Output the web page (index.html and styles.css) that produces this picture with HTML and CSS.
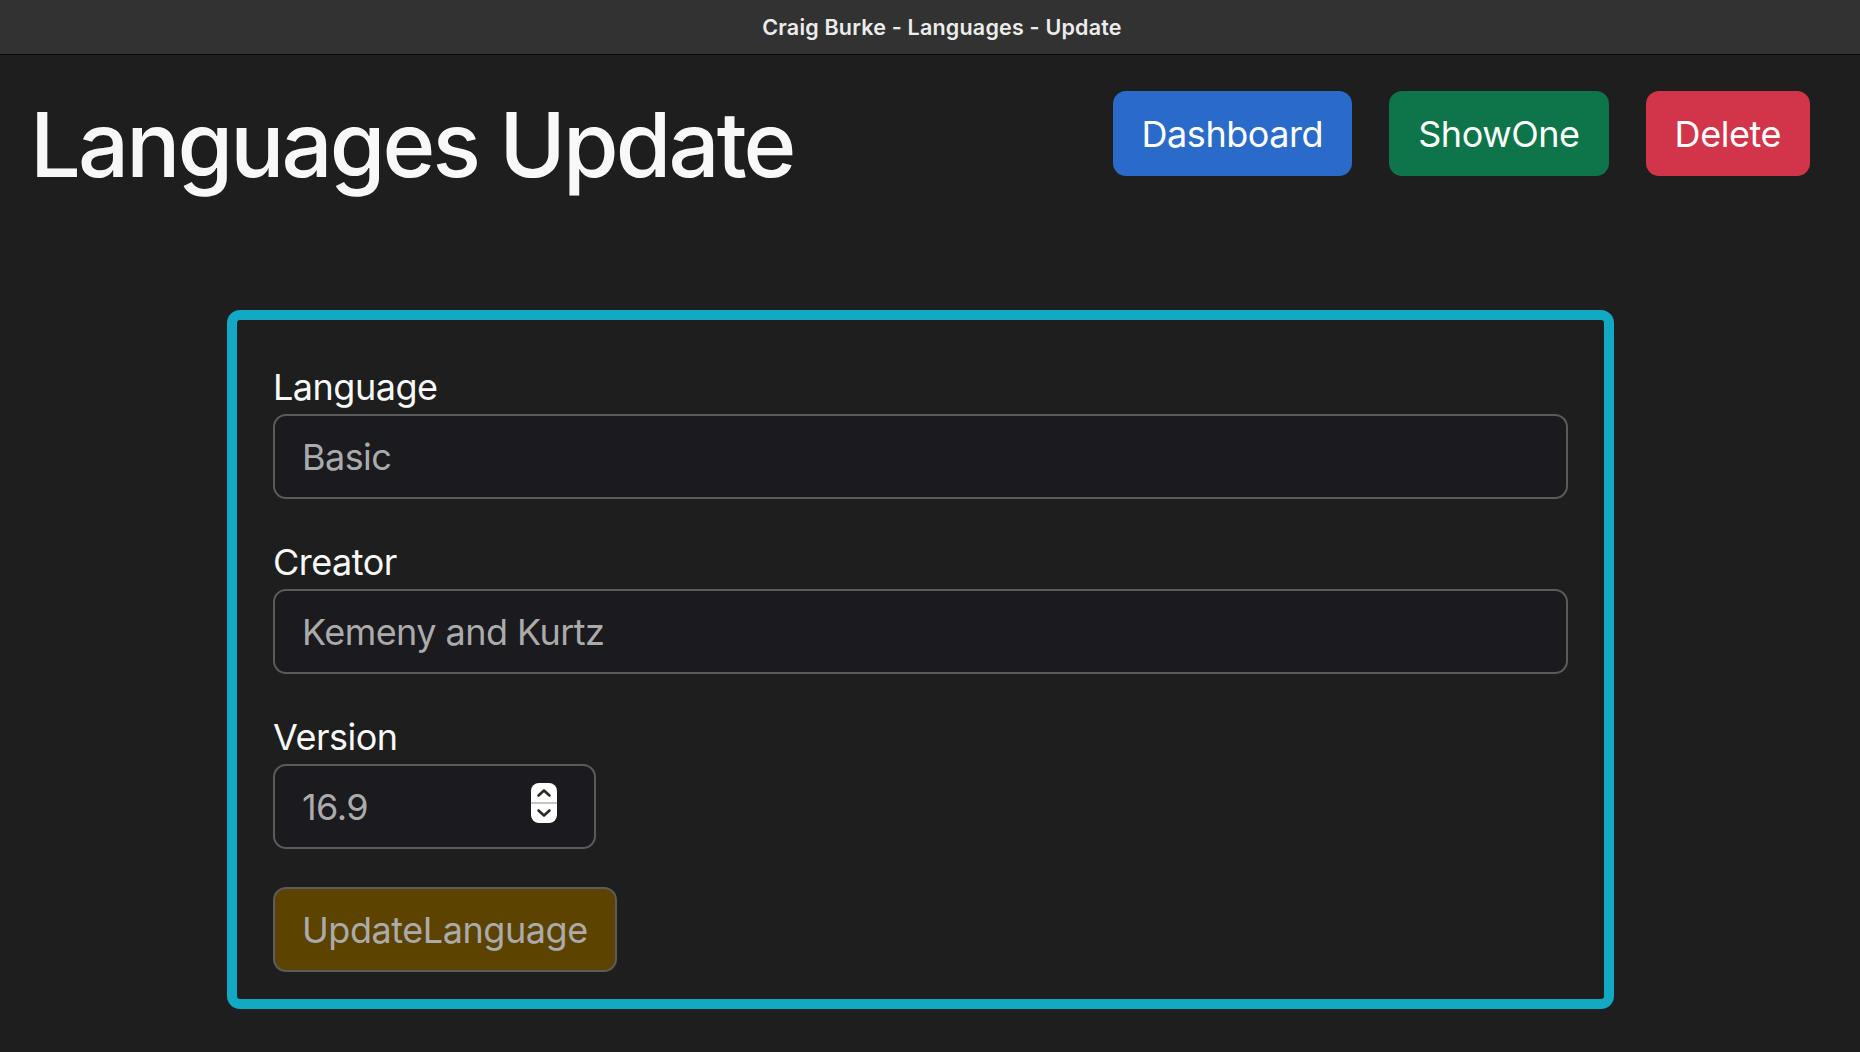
FILE: index.html
```html
<!DOCTYPE html>
<html lang="en">
<head>
<meta charset="utf-8">
<title>Craig Burke - Languages - Update</title>
<link rel="stylesheet" href="styles.css">
</head>
<body>
<div class="titlebar">Craig Burke - Languages - Update</div>
<header class="header">
  <h1 class="page-title">Languages Update</h1>
  <nav class="nav">
    <a class="btn btn-primary" href="#">Dashboard</a>
    <a class="btn btn-success" href="#">ShowOne</a>
    <a class="btn btn-danger" href="#">Delete</a>
  </nav>
</header>
<main class="card">
  <form class="form">
    <div class="group">
      <label class="label" for="lang">Language</label>
      <input class="input" id="lang" type="text" value="Basic">
    </div>
    <div class="group">
      <label class="label" for="creator">Creator</label>
      <input class="input" id="creator" type="text" value="Kemeny and Kurtz">
    </div>
    <div class="group group-last">
      <label class="label" for="version">Version</label>
      <div class="num-wrap">
        <input class="input input-num" id="version" type="text" value="16.9">
        <svg class="spinner" width="26" height="40" viewBox="0 0 26 40" aria-hidden="true">
          <rect x="0" y="0" width="26" height="40" rx="8" fill="#ffffff"/>
          <line x1="0" y1="20" x2="26" y2="20" stroke="#c4c4c4" stroke-width="2"/>
          <path d="M7.5 12.5 L13 7.5 L18.5 12.5" fill="none" stroke="#2a2a2a" stroke-width="2.6" stroke-linecap="round" stroke-linejoin="round"/>
          <path d="M7.5 27.5 L13 32.5 L18.5 27.5" fill="none" stroke="#2a2a2a" stroke-width="2.6" stroke-linecap="round" stroke-linejoin="round"/>
        </svg>
      </div>
    </div>
    <button class="btn btn-update" type="button">UpdateLanguage</button>
  </form>
</main>
</body>
</html>
```
FILE: styles.css
```css
* { box-sizing: border-box; }

body {
  margin: 0;
  background: #1e1e1e;
  font-family: Inter, "Noto Sans", "Liberation Sans", sans-serif;
  color: #f8f8f8;
  min-height: 1052px;
}

.titlebar {
  height: 55px;
  background: #323232;
  border-bottom: 1px solid #050505;
  display: flex;
  align-items: center;
  justify-content: center;
  padding-left: 24px;
  color: #ececec;
  font-size: 21.5px;
  font-weight: 600;
  letter-spacing: 0.2px;
}

.header {
  display: flex;
  justify-content: space-between;
  align-items: flex-start;
  padding: 36px 50px 0 30px;
}

.page-title {
  margin: 0 0 18px 0;
  font-size: 90px;
  font-weight: 500;
  line-height: 108px;
  letter-spacing: -2.9px;
}

.nav {
  display: flex;
  gap: 37px;
}

.btn {
  display: inline-block;
  font-family: inherit;
  font-size: 36px;
  line-height: 54px;
  padding: 13.5px 27px;
  border: 2px solid transparent;
  border-radius: 13px;
  color: #ffffff;
  text-decoration: none;
  letter-spacing: -0.45px;
  cursor: pointer;
}

.btn-primary { background: #2a6bc9; }
.btn-success { background: #0e744a; }
.btn-danger { background: #d2344a; }

.card {
  margin: 93px 0 0 227px;
  width: 1387px;
  border: 10.5px solid #12a9c5;
  border-radius: 13px;
  padding: 40px 36px 27px 36px;
}

.group { margin-bottom: 36px; }
.group-last { margin-bottom: 38px; }

.label {
  display: block;
  font-size: 36px;
  line-height: 54px;
  color: #f8f8f8;
  letter-spacing: -0.5px;
}

.input {
  display: block;
  width: 100%;
  height: 85px;
  background: #1b1a1f;
  border: 2px solid #5b5b5b;
  border-radius: 13px;
  padding: 0 27px;
  font-family: inherit;
  font-size: 36px;
  color: #ababab;
  letter-spacing: -0.55px;
  outline: none;
}

.num-wrap {
  position: relative;
  width: 323px;
}

.spinner {
  position: absolute;
  left: 258px;
  top: 19px;
}

.btn-update {
  background: #5c4300;
  border-color: #5c5c5c;
  color: #ababab;
}
```
